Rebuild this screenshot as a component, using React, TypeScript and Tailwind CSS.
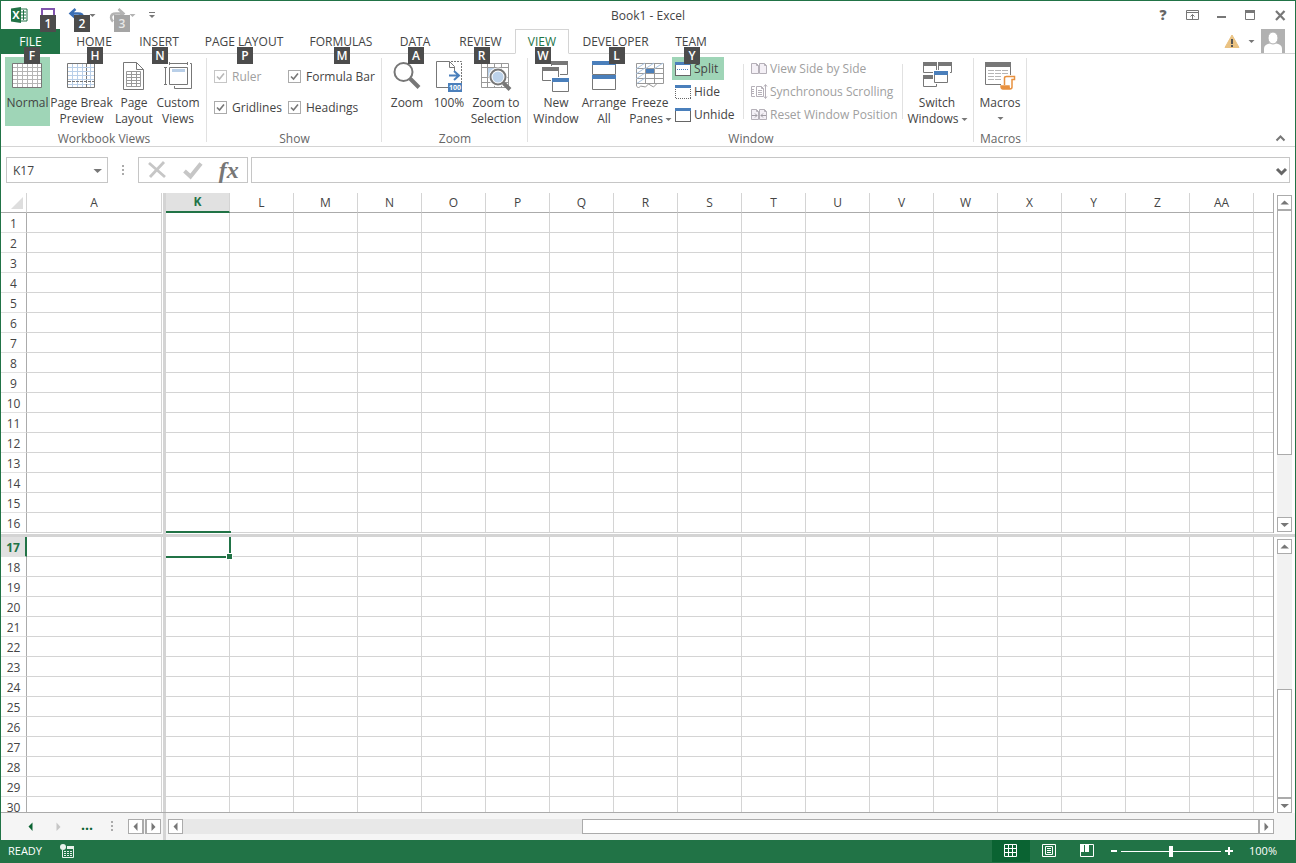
import type { ReactNode } from "react";
import clsx from "clsx";

const GRAY = "#777777";
const BLUE = "#4a7fbb";

const columns = ["K", "L", "M", "N", "O", "P", "Q", "R", "S", "T", "U", "V", "W", "X", "Y", "Z", "AA"];
const topRows = Array.from({ length: 16 }, (_, i) => i + 1);
const bottomRows = Array.from({ length: 14 }, (_, i) => i + 17);

const tabs = [
  { name: "HOME", tip: "H", width: "w-[68px]" },
  { name: "INSERT", tip: "N", width: "w-[62px]" },
  { name: "PAGE LAYOUT", tip: "P", width: "w-[108px]" },
  { name: "FORMULAS", tip: "M", width: "w-[86px]" },
  { name: "DATA", tip: "A", width: "w-[62px]" },
  { name: "REVIEW", tip: "R", width: "w-[69px]" },
  { name: "VIEW", tip: "W", width: "w-[54px]" },
  { name: "DEVELOPER", tip: "L", width: "w-[93px]" },
  { name: "TEAM", tip: "Y", width: "w-[58px]" },
];

function Icon({ w = 32, h = 32, children }: { w?: number; h?: number; children: ReactNode }) {
  return (
    <svg width={w} height={h} viewBox={`0 0 ${w} ${h}`} fill="none" className="shrink-0 overflow-visible" aria-hidden="true">
      {children}
    </svg>
  );
}

function Caret({ dir = "down", color = GRAY }: { dir?: "down" | "up" | "left" | "right"; color?: string }) {
  const paths = {
    down: "M-.5 2h8.500L3.500 6z",
    up: "M-.5 5.500h8.500L3.500 1.500z",
    left: "M5.500-.5v8.500L1.500 3.500z",
    right: "M1.500-.5v8.500l4-4z",
  };
  return (
    <Icon w={7} h={7}>
      <path d={paths[dir]} fill={color} />
    </Icon>
  );
}

function SmallCaret({ color = GRAY }: { color?: string }) {
  return (
    <Icon w={5} h={3}>
      <path d="M-.5 0h6L2.500 3z" fill={color} />
    </Icon>
  );
}

function KeyTip({ label, muted, className }: { label: string; muted?: boolean; className?: string }) {
  return (
    <span
      className={clsx(
        "pointer-events-none absolute z-10 flex h-[17px] w-4 items-center justify-center text-xs font-semibold leading-4",
        muted ? "bg-[#a5a5a5] text-[#e8e8e8]" : "bg-[#4c4c4c] text-white",
        className
      )}
    >
      {label}
    </span>
  );
}

/* ---------- title bar ---------- */

function TitleBar() {
  return (
    <header className="relative flex h-7 items-center justify-between pl-[10px] pr-[9px]">
      <div className="flex h-full items-center">
        <Icon w={17} h={18}>
          <path d="M8 3h8v12H8z" fill="#fff" stroke="#217346" />
          <path d="M9 6h6M9 9h6M9 12h6M12.500 4v10" stroke="#217346" />
          <path d="M0 2.500L10 1v16L0 15.500z" fill="#217346" />
          <text x="5" y="13" textAnchor="middle" fill="#fff" className="text-[11px] font-bold">
            X
          </text>
        </Icon>
        <button aria-label="Save" className="relative ml-3 flex h-7 w-4 items-center justify-center">
          <Icon w={14} h={14}>
            <path d="M1 1h12v12H3l-2-2z" stroke="#8054ad" strokeWidth="2" />
            <path d="M4 8h6v5H4z" fill="#8054ad" />
          </Icon>
          <KeyTip label="1" className="left-0 top-[14px]" />
        </button>
        <button aria-label="Undo" className="relative ml-[13px] flex h-7 w-[26px] items-center justify-between">
          <Icon w={16} h={14}>
            <path d="M6.500 1L1.500 5.500l5 4.500M2 5.500h7c4 0 5 2 5 4s-1 3-2 4" stroke="#3b6fb5" strokeWidth="2.500" />
          </Icon>
          <SmallCaret />
          <KeyTip label="2" className="left-[5px] top-[14px]" />
        </button>
        <button aria-label="Redo" className="relative ml-[14px] flex h-7 w-[26px] items-center justify-between">
          <Icon w={16} h={14}>
            <path d="M9.500 1l5 4.500-5 4.500M14 5.500H7C3 5.500 2 7.500 2 9.500s1 3 2 4" stroke="#b3b3b3" strokeWidth="2.500" />
          </Icon>
          <SmallCaret color="#b3b3b3" />
          <KeyTip label="3" muted className="left-[5px] top-[14px]" />
        </button>
        <button aria-label="Customize Quick Access Toolbar" className="ml-3 flex h-7 w-[10px] items-center justify-center">
          <Icon w={6} h={6}>
            <path d="M0 .5h6" stroke={GRAY} />
            <path d="M0 3h6L3 6z" fill={GRAY} />
          </Icon>
        </button>
      </div>

      <h1 className="pointer-events-none absolute inset-x-0 top-[7px] text-center text-xs font-normal leading-4">
        Book1 - Excel
      </h1>

      <div className="flex h-full items-center">
        <button aria-label="Help" className="w-[30px] text-center text-sm font-extrabold leading-4 text-[#666]">
          ?
        </button>
        <button aria-label="Ribbon Display Options" className="flex w-[29px] justify-center">
          <Icon w={13} h={11}>
            <path d="M.5.500h12v9H.500zM.500 2.500h12M6.500 9V4.500M4.500 6.500l2-2 2 2" stroke={GRAY} />
          </Icon>
        </button>
        <button aria-label="Minimize" className="flex w-[29px] justify-center">
          <Icon w={9} h={10}>
            <path d="M0 6h9v2H0z" fill={GRAY} />
          </Icon>
        </button>
        <button aria-label="Maximize" className="flex w-[29px] justify-center">
          <Icon w={11} h={11}>
            <path d="M.5 1v8.500h9V1" stroke={GRAY} />
            <path d="M0 0h10v3H0z" fill={GRAY} />
          </Icon>
        </button>
        <button aria-label="Close" className="ml-[10px] flex w-[11px] justify-center">
          <Icon w={11} h={11}>
            <path d="M1 1l8.500 9M9.500 1L1 10" stroke={GRAY} strokeWidth="2.200" />
          </Icon>
        </button>
      </div>
    </header>
  );
}

function TabBar() {
  return (
    <nav className="flex h-[25px] text-xs leading-4" aria-label="Ribbon tabs">
      <button className="relative flex w-[59px] justify-center bg-[#217346] pt-[5px] text-white">
        FILE
        <KeyTip label="F" className="left-[23px] top-[18px]" />
      </button>
      {tabs.map((tab) => (
        <button
          key={tab.name}
          className={clsx(
            "relative flex justify-center whitespace-nowrap border-b",
            tab.width,
            tab.name === "VIEW"
              ? "border-x border-t border-[#d4d4d4] border-b-white pt-1 text-[#217346]"
              : "border-[#d4d4d4] pt-[5px]"
          )}
        >
          {tab.name}
          <KeyTip label={tab.tip} className={clsx("left-1/2 -ml-[7px]", tab.name === "VIEW" ? "top-[17px]" : "top-[18px]")} />
        </button>
      ))}
      <div className="flex flex-1 items-center justify-end border-b border-[#d4d4d4] pr-[10px]">
        <button aria-label="Account warning" className="flex items-center gap-[9px]">
          <Icon w={16} h={15}>
            <path d="M8 1l7 12.500H1z" fill="#eac282" stroke="#eac282" strokeLinejoin="round" />
            <path d="M7 5h2v5H7zM7 11h2v2H7z" fill="#555" />
          </Icon>
          <SmallCaret />
        </button>
        <button aria-label="Account" className="ml-[7px]">
          <Icon w={24} h={24}>
            <path d="M0 0h24v24H0z" fill="#b1b1b1" />
            <path d="M3 24v-4c0-4 3-5 6-5.500h6c3 .5 6 1.500 6 5.500v4z" fill="#fff" />
            <ellipse cx="12" cy="9" rx="5" ry="6" fill="#fff" stroke="#b1b1b1" />
          </Icon>
        </button>
      </div>
    </nav>
  );
}

/* ---------- ribbon ---------- */

function Group({ label, className, children }: { label: string; className: string; children: ReactNode }) {
  return (
    <section className={clsx("relative flex h-[92px] flex-col pt-[3px]", className)}>
      <div className="flex h-[69px] shrink-0">{children}</div>
      <h2 className="mt-[5px] text-center text-xs font-normal leading-4 text-[#666]">{label}</h2>
      <span className="absolute right-0 top-1 h-[84px] w-px bg-[#e1e1e1]" />
    </section>
  );
}

function BigButton({
  lines,
  width,
  active,
  caret,
  children,
}: {
  lines: string[];
  width: string;
  active?: boolean;
  caret?: boolean;
  children: ReactNode;
}) {
  return (
    <button
      className={clsx("flex h-[69px] shrink-0 flex-col items-center pt-0.5 text-xs leading-4 whitespace-nowrap", width, active && "bg-[#9fd5b7]")}
    >
      {children}
      <span className="mt-1">{lines[0]}</span>
      <span className="flex h-4 items-center gap-[3px]">
        {lines[1]}
        {caret && <SmallCaret />}
      </span>
    </button>
  );
}

function SmallButton({ label, active, disabled, children }: { label: string; active?: boolean; disabled?: boolean; children: ReactNode }) {
  return (
    <button
      disabled={disabled}
      className={clsx(
        "flex h-[23px] items-center gap-[3px] pl-[3px] pr-[6px] text-xs whitespace-nowrap",
        active && "bg-[#9fd5b7]",
        disabled && "text-[#a0a0a0]"
      )}
    >
      {children}
      {label}
    </button>
  );
}

function Check({ label, disabled }: { label: string; disabled?: boolean }) {
  return (
    <label className={clsx("flex h-[31px] items-center gap-[5px] text-xs whitespace-nowrap", disabled && "text-[#a0a0a0]")}>
      <span className="relative flex">
        <input
          type="checkbox"
          defaultChecked
          disabled={disabled}
          className="peer size-[13px] appearance-none border border-[#ababab] bg-white disabled:border-[#c6c6c6]"
        />
        <svg
          viewBox="0 0 13 13"
          fill="none"
          className={clsx("pointer-events-none invisible absolute inset-0 size-[13px] peer-checked:visible", disabled ? "text-[#b8b8b8]" : "text-[#777]")}
        >
          <path d="M3 6.500L5.500 9 10 3.500" stroke="currentColor" strokeWidth="1.600" />
        </svg>
      </span>
      {label}
    </label>
  );
}

function NormalIcon() {
  return (
    <Icon w={31}>
      <path d="M.5 4.500h29v24H.5z" fill="#fff" />
      <path d="M1 8.500h28M1 12.500h28M1 16.500h28M1 20.500h28M1 24.500h28M5.500 5v23M10.500 5v23M15.500 5v23M20.500 5v23M25.500 5v23" stroke="#b5b5b5" />
      <path d="M.5 4.500h29v24H.5z" stroke={GRAY} />
    </Icon>
  );
}

function PageBreakIcon() {
  return (
    <Icon w={31}>
      <path d="M2 8.500h26M2 12.500h26M2 16.500h26M2 20.500h26M2 25.500h26M6.500 5v23M11.500 5v23M16.500 5v23M24.500 5v23" stroke="#b9cfe8" />
      <path d="M1.500 4.500h27v24h-27z" stroke={GRAY} />
      <path d="M2 22.500h26M20.500 5v23" stroke={GRAY} strokeDasharray="3 1" />
    </Icon>
  );
}

function PageLayoutIcon() {
  return (
    <Icon>
      <path d="M5.500 3.500h13l7 7v20h-20z" fill="#fff" stroke={GRAY} />
      <path d="M18.500 3.500v7h7" stroke={GRAY} />
      <path d="M8.500 12.500h14v15h-14zM8.500 15.500h14M8.500 18.500h14M8.500 21.500h14M8.500 24.500h14M13.500 12v15M18.500 12v15" stroke="#999" />
    </Icon>
  );
}

function CustomViewsIcon() {
  return (
    <Icon>
      <path d="M7.500 8.500h18v17h-18z" stroke={GRAY} />
      <path d="M10 10h13v3H10z" fill="#b9cfe8" />
      <path d="M7.500 3v3M25.500 3v3M7 4.500h19M2 8.500h3M2 25.500h3M3.500 8v18M28 4.500h1.500v25h-17V27" stroke={GRAY} />
    </Icon>
  );
}

function ZoomIcon() {
  return (
    <Icon w={30}>
      <circle cx="11.500" cy="13" r="9" fill="#fff" stroke={GRAY} strokeWidth="2" />
      <path d="M18 19.500l9 9" stroke={GRAY} strokeWidth="4" />
    </Icon>
  );
}

function HundredIcon() {
  return (
    <Icon w={28} h={32}>
      <path d="M13 28.500H1.500v-26h13l5 5v5" stroke={GRAY} />
      <path d="M14.500 2.500v6h5" stroke={GRAY} />
      <path d="M16 2.500h10.500V24" stroke={GRAY} strokeDasharray="2 1" />
      <path d="M14 16.500h9M19 12l5 4.500-5 4.500" stroke={BLUE} strokeWidth="2" />
      <path d="M13 24h14v9H13z" fill={BLUE} />
      <text x="20" y="31" textAnchor="middle" fill="#fff" className="text-[7px] font-bold">
        100
      </text>
    </Icon>
  );
}

function ZoomSelectionIcon() {
  return (
    <Icon>
      <path d="M1.500 4.500h27v24h-27zM1.500 8.500h27M1.500 18.500h27M1.500 23.500h27M7.500 4v24M14.500 4v24M21.500 4v24" stroke="#999" />
      <path d="M8 9h7v9H8z" fill="#bcd2ea" />
      <circle cx="18" cy="18" r="9.500" fill="#fff" />
      <circle cx="18" cy="18" r="7.500" fill="#fff" stroke={GRAY} strokeWidth="2" />
      <circle cx="18" cy="18" r="5.500" fill="#bcd2ea" />
      <path d="M23.500 24l6.500 6.500" stroke={GRAY} strokeWidth="4" />
    </Icon>
  );
}

function Win({ x, y, w, h, color = GRAY }: { x: number; y: number; w: number; h: number; color?: string }) {
  return (
    <>
      <path d={`M${x + 0.5} ${y + 0.5}h${w - 1}v${h - 1}h${1 - w}z`} fill="#fff" stroke={GRAY} />
      <path d={`M${x} ${y}h${w}v4h${-w}z`} fill={color} />
    </>
  );
}

function NewWindowIcon() {
  return (
    <Icon>
      <Win x={11} y={2} w={17} h={14} />
      <path d="M1 7h19v16H1z" fill="#fff" />
      <Win x={2} y={8} w={17} h={14} />
      <path d="M11 18h19v14H11z" fill="#fff" />
      <Win x={12} y={19} w={17} h={14} color={BLUE} />
    </Icon>
  );
}

function ArrangeIcon() {
  return (
    <Icon>
      <Win x={4} y={2} w={24} h={14} color={BLUE} />
      <Win x={4} y={16} w={24} h={15} color={BLUE} />
    </Icon>
  );
}

function FreezeIcon() {
  return (
    <Icon>
      <path d="M2.500 4.500h27v20h-27zM2.500 9.500h27M2.500 14.500h27M2.500 19.500h27M11.500 4v20M20.500 4v20" stroke="#999" />
      <path d="M2 10l9-6M11 10l9-6M20 10l9-6M2 15l9-6M2 20l9-6M2 25l9-6" stroke="#a9c4e2" />
      <path d="M12 10h8v4h-8z" fill={BLUE} />
      <path d="M2.500 24v3c1 2 3 2 4 0l5 1 3-3 5 3 3-3" stroke="#999" />
    </Icon>
  );
}

function SwitchIcon() {
  return (
    <Icon>
      <Win x={2} y={3} w={14} h={11} />
      <Win x={17} y={3} w={14} h={11} />
      <Win x={2} y={16} w={14} h={12} />
      <path d="M12 11h17v14H12z" fill="#fff" />
      <Win x={13} y={12} w={14} h={12} color={BLUE} />
    </Icon>
  );
}

function MacrosIcon() {
  return (
    <Icon>
      <path d="M1.500 3.500h25v22h-25z" fill="#fff" stroke={GRAY} />
      <path d="M1 3h26v5H1z" fill={GRAY} />
      <path d="M4 11.500h20M4 14.500h20M4 17.500h20M4 20.500h20" stroke="#b5b5b5" strokeDasharray="6 1" />
      <path d="M17 16h15v15H17z" fill="#fff" />
      <path d="M20.500 26v-7c0-1 .5-1.500 2-1.500h8v3H28V28c0 1.500-.5 2-2 2h-7c-1.500 0-2-1-2-3h8c0 2 .5 3 1.500 3" stroke="#e8913f" strokeWidth="1.500" />
      <path d="M18 27h7v3h-7z" fill="#e8913f" />
    </Icon>
  );
}

function SmallWindow({ kind }: { kind: "split" | "hide" | "unhide" }) {
  return (
    <Icon w={16} h={14}>
      <path
        d="M.5.500h15v13H.5z"
        fill="#fff"
        stroke="#666"
        strokeDasharray={kind === "hide" ? "1 1" : undefined}
        shapeRendering="crispEdges"
      />
      <path d="M0 0h16v3H0z" fill={BLUE} />
      {kind === "split" && <path d="M2 7.500h12" stroke={BLUE} strokeDasharray="1 1" shapeRendering="crispEdges" />}
    </Icon>
  );
}

function Pages({ kind }: { kind: "side" | "sync" | "reset" }) {
  return (
    <Icon w={16} h={15}>
      {kind === "sync" ? (
        <path d="M4 2.500H.500v10H4M5.500 2.500h5l2 2v8h-7zM10.500 2.500v2h2M7 6.500h4M7 8.500h4M7 10.500h4M1 5.500h2M1 7.500h2M1 9.500h2M14.500 1v13M13 2.500l1.500-2 1.500 2M13 12.500l1.500 2 1.500-2" stroke="#b5b0b8" />
      ) : (
        <>
          <path d="M.5 2.500h5l2 2v8h-7zM5.500 2.500v2h2M8.500 2.500h5l2 2v8h-7zM13.500 2.500v2h2" fill="#f4f0f6" stroke="#b5b0b8" />
          {kind === "reset" && <path d="M1 8.500h5M4 6.500l2 2-2 2M15 8.500h-5M12 6.500l-2 2 2 2" stroke="#a09ca4" />}
        </>
      )}
    </Icon>
  );
}

function Divider() {
  return <span className="mt-[7px] h-[55px] w-px shrink-0 bg-[#e1e1e1]" />;
}

function Ribbon() {
  return (
    <div className="flex h-[93px] border-b border-[#d4d4d4]">
      <Group label="Workbook Views" className="w-[206px] px-1">
        <BigButton lines={["Normal"]} width="w-[45px]" active>
          <NormalIcon />
        </BigButton>
        <BigButton lines={["Page Break", "Preview"]} width="w-[63px]">
          <PageBreakIcon />
        </BigButton>
        <BigButton lines={["Page", "Layout"]} width="w-[42px]">
          <PageLayoutIcon />
        </BigButton>
        <BigButton lines={["Custom", "Views"]} width="w-[46px]">
          <CustomViewsIcon />
        </BigButton>
      </Group>
      <Group label="Show" className="w-[175px]">
        <div className="flex gap-[10px] pl-[7px] pt-1">
          <div className="w-16">
            <Check label="Ruler" disabled />
            <Check label="Gridlines" />
          </div>
          <div>
            <Check label="Formula Bar" />
            <Check label="Headings" />
          </div>
        </div>
      </Group>
      <Group label="Zoom" className="w-[146px] px-[3px]">
        <BigButton lines={["Zoom"]} width="w-[44px]">
          <ZoomIcon />
        </BigButton>
        <BigButton lines={["100%"]} width="w-[40px]">
          <HundredIcon />
        </BigButton>
        <BigButton lines={["Zoom to", "Selection"]} width="w-[54px]">
          <ZoomSelectionIcon />
        </BigButton>
      </Group>
      <Group label="Window" className="w-[446px] px-1">
        <BigButton lines={["New", "Window"]} width="w-[48px]">
          <NewWindowIcon />
        </BigButton>
        <BigButton lines={["Arrange", "All"]} width="w-[48px]">
          <ArrangeIcon />
        </BigButton>
        <BigButton lines={["Freeze", "Panes"]} width="w-[44px]" caret>
          <FreezeIcon />
        </BigButton>
        <div className="flex w-[71px] shrink-0 flex-col items-start">
          <SmallButton label="Split" active>
            <SmallWindow kind="split" />
          </SmallButton>
          <SmallButton label="Hide">
            <SmallWindow kind="hide" />
          </SmallButton>
          <SmallButton label="Unhide">
            <SmallWindow kind="unhide" />
          </SmallButton>
        </div>
        <Divider />
        <div className="flex w-[158px] shrink-0 flex-col items-start pl-1">
          <SmallButton label="View Side by Side" disabled>
            <Pages kind="side" />
          </SmallButton>
          <SmallButton label="Synchronous Scrolling" disabled>
            <Pages kind="sync" />
          </SmallButton>
          <SmallButton label="Reset Window Position" disabled>
            <Pages kind="reset" />
          </SmallButton>
        </div>
        <Divider />
        <BigButton lines={["Switch", "Windows"]} width="w-[68px]" caret>
          <SwitchIcon />
        </BigButton>
      </Group>
      <Group label="Macros" className="w-[53px]">
        <BigButton lines={["Macros"]} width="w-[52px]" caret>
          <MacrosIcon />
        </BigButton>
      </Group>
      <div className="flex flex-1 items-end justify-end pb-[5px] pr-[10px]">
        <button aria-label="Collapse the Ribbon">
          <Icon w={9} h={6}>
            <path d="M.5 5.500l4-4 4 4" stroke={GRAY} strokeWidth="2" />
          </Icon>
        </button>
      </div>
    </div>
  );
}

/* ---------- formula bar ---------- */

function Dots() {
  return (
    <Icon w={2} h={11}>
      <path d="M0 0h2v2H0zM0 4h2v2H0zM0 8h2v2H0z" fill="#ababab" />
    </Icon>
  );
}

function FormulaBar() {
  return (
    <div className="flex h-[46px] items-center px-[5px]">
      <div className="flex h-[26px] w-[102px] items-center border border-[#c6c6c6] pr-[6px]">
        <input aria-label="Name Box" defaultValue="K17" className="min-w-0 flex-1 pl-[6px] pt-0.5 text-xs outline-none" />
        <button aria-label="Name Box list">
          <Caret />
        </button>
      </div>
      <div className="flex w-[30px] justify-center">
        <Dots />
      </div>
      <div className="flex h-[26px] w-[110px] items-center justify-around border border-[#c6c6c6]">
        <button aria-label="Cancel">
          <Icon w={18} h={18}>
            <path d="M2 2l16 14M17 1L3 16" stroke="#c6c6c6" strokeWidth="2.800" />
          </Icon>
        </button>
        <button aria-label="Enter">
          <Icon w={20} h={18}>
            <path d="M2.500 10l6 5.500L19 2.500" stroke="#c6c6c6" strokeWidth="4" />
          </Icon>
        </button>
        <button aria-label="Insert Function" className="font-['Liberation_Serif',serif] text-2xl font-bold italic leading-5 text-[#777]">
          fx
        </button>
      </div>
      <div className="ml-[3px] flex h-[26px] flex-1 items-center border border-[#c6c6c6] pr-0.5">
        <input aria-label="Formula Bar input" className="h-full min-w-0 flex-1 px-2 text-xs outline-none" />
        <button aria-label="Expand Formula Bar" className="pt-1">
          <Icon w={11} h={8}>
            <path d="M1 1l4.500 4.500L10 1" stroke="#666" strokeWidth="3" />
          </Icon>
        </button>
      </div>
    </div>
  );
}

/* ---------- sheet ---------- */

const line = "border-b border-[#d4d4d4]";

function Columns() {
  return (
    <colgroup>
      <col className="w-[26px]" />
      <col className="w-[135px]" />
      <col className="w-1" />
      {columns.map((c) => (
        <col key={c} className="w-16" />
      ))}
      <col />
    </colgroup>
  );
}

function Row({ n }: { n: number }) {
  const current = n === 17;
  return (
    <tr className="h-5">
      <th
        scope="row"
        className={clsx(
          "h-5 border-b border-[#e1e1e1] p-0 pt-0.5 text-center leading-4",
          current
            ? "border-r-2 border-r-[#217346] bg-[#e1e1e1] font-bold text-[#217346]"
            : "border-r border-r-[#ababab] font-normal"
        )}
      >
        {n}
      </th>
      <td className={clsx("border-r p-0", line)} />
      <td className="border-r-[3px] border-[#d4d4d4] p-0" />
      {columns.map((c) => (
        <td key={c} className={clsx("relative border-r p-0", line)}>
          {c === "K" && n === 16 && <span className="absolute -right-0.5 bottom-[-1px] left-0 z-10 h-0.5 bg-[#217346]" />}
          {c === "K" && current && (
            <>
              <span className="absolute -bottom-0.5 -right-0.5 left-0 top-0 z-10 border-b-2 border-r-2 border-[#217346]" />
              <span className="absolute -bottom-1 -right-1 z-10 size-[7px] border border-white bg-[#217346]" />
            </>
          )}
        </td>
      ))}
      <td className={clsx("p-0", line)} />
    </tr>
  );
}

function ScrollButton({ dir }: { dir: "down" | "up" | "left" | "right" }) {
  return (
    <button aria-label={`Scroll ${dir}`} className="flex size-[15px] shrink-0 items-center justify-center border border-[#ababab] bg-white">
      <Caret dir={dir} />
    </button>
  );
}

const tableClass = "w-full table-fixed border-separate border-spacing-0 text-xs";

function Sheet() {
  return (
    <main className="flex min-h-0 flex-1 flex-col">
      <div className="flex">
        <div className="min-w-0 flex-1 overflow-hidden border-r border-[#ababab]">
          <table className={tableClass}>
            <Columns />
            <thead>
              <tr className="h-5">
                <th aria-label="Select all" className="h-5 border-b border-r border-[#ababab] border-r-[#d4d4d4] p-0">
                  <span className="flex justify-end pr-[3px]">
                    <Icon w={12} h={12}>
                      <path d="M12 0v12H0z" fill="#dedede" />
                    </Icon>
                  </span>
                </th>
                <th className="border-b border-r border-[#ababab] border-r-[#d4d4d4] p-0 font-normal">A</th>
                <th className="border-r-[3px] border-[#d4d4d4] p-0" />
                {columns.map((c) => (
                  <th
                    key={c}
                    scope="col"
                    className={clsx(
                      "border-r border-r-[#d4d4d4] p-0 leading-4",
                      c === "K" ? "border-b-2 border-b-[#217346] bg-[#e1e1e1] font-bold text-[#217346]" : "border-b border-b-[#ababab] font-normal"
                    )}
                  >
                    {c}
                  </th>
                ))}
                <th className="border-b border-[#ababab] p-0" />
              </tr>
            </thead>
            <tbody>
              {topRows.map((n) => (
                <Row key={n} n={n} />
              ))}
            </tbody>
          </table>
        </div>
        <div className="flex w-[21px] flex-col px-[3px] pt-0.5 pb-px">
          <ScrollButton dir="up" />
          <div className="flex flex-1 flex-col bg-[#f2f2f2]">
            <div className="flex-1 border border-[#ababab] bg-white" />
            <div className="h-[62px]" />
          </div>
          <ScrollButton dir="down" />
        </div>
      </div>

      <div className="flex h-px shrink-0 pl-[162px]">
        <span className="w-[3px] bg-[#d4d4d4]" />
      </div>
      <div className="h-[3px] shrink-0 bg-[#d4d4d4]" />

      <div className="flex min-h-0 flex-1">
        <div className="min-w-0 flex-1 overflow-hidden border-b border-r border-[#ababab]">
          <table className={tableClass}>
            <Columns />
            <tbody>
              {bottomRows.map((n) => (
                <Row key={n} n={n} />
              ))}
            </tbody>
          </table>
        </div>
        <div className="flex w-[21px] flex-col px-[3px] pt-0.5">
          <ScrollButton dir="up" />
          <div className="flex flex-1 flex-col bg-[#f2f2f2]">
            <div className="h-[135px]" />
            <div className="flex-1 border border-[#ababab] bg-white" />
          </div>
          <ScrollButton dir="down" />
        </div>
      </div>
    </main>
  );
}

function SheetBar() {
  return (
    <div className="flex h-[27px] shrink-0 items-center bg-[#f5f5f5]">
      <div className="flex w-[162px] items-center pl-[26px] pr-0.5">
        <button aria-label="Previous sheet">
          <Caret dir="left" color="#0a6332" />
        </button>
        <button aria-label="Next sheet" className="ml-[21px]">
          <Caret dir="right" color="#c6c6c6" />
        </button>
        <button className="ml-[19px] pb-1 text-sm font-bold leading-4 text-[#0a6332]">...</button>
        <span className="ml-auto mr-[15px]">
          <Dots />
        </span>
        <ScrollButton dir="left" />
        <span className="h-[15px] w-[3px] border-x border-[#ababab]" />
        <ScrollButton dir="right" />
      </div>
      <span className="h-full w-[3px] bg-[#d4d4d4]" />
      <div className="flex flex-1 pl-0.5 pr-[21px]">
        <ScrollButton dir="left" />
        <div className="flex flex-1 bg-[#e8e8e8]">
          <div className="w-[399px]" />
          <div className="flex-1 border border-[#ababab] bg-white" />
        </div>
        <ScrollButton dir="right" />
      </div>
    </div>
  );
}

function StatusBar() {
  return (
    <footer className="flex h-[22px] shrink-0 items-center bg-[#217346] pl-[7px] pr-[18px] text-[11px] text-white">
      <span>READY</span>
      <button aria-label="Record Macro" className="ml-[18px]">
        <Icon w={14} h={14}>
          <path d="M2.500 6v7.500h11V2.500H7" stroke="#e8f2ec" />
          <path d="M7 2h7v3H7z" fill="#e8f2ec" />
          <path d="M4 7.500h8M4 9.500h8M4 11.500h8" stroke="#e8f2ec" strokeDasharray="2 1" />
          <circle cx="3" cy="3" r="3" fill="#e8f2ec" />
        </Icon>
      </button>
      <div className="ml-auto flex h-full">
        <button aria-label="Normal view" className="flex w-[38px] items-center justify-center bg-[#0a6332]">
          <Icon w={14} h={14}>
            <path d="M.5.500h12v12H.500zM.500 4.500h12M.500 8.500h12M4.500.500v12M8.500.500v12" stroke="#fff" />
          </Icon>
        </button>
        <button aria-label="Page Layout view" className="flex w-[38px] items-center justify-center">
          <Icon w={14} h={14}>
            <path d="M.5.500h13v12H.500zM3.500 2.500h7v8h-7zM5 4.500h4M5 6.500h4M5 8.500h4" stroke="#fff" />
          </Icon>
        </button>
        <button aria-label="Page Break Preview" className="flex w-[38px] items-center justify-center">
          <Icon w={14} h={14}>
            <path d="M.5.500h13v12H.500z" stroke="#fff" />
            <path d="M0 0h4v8H0zM5 0h4v8H5z" fill="#fff" />
          </Icon>
        </button>
      </div>
      <button aria-label="Zoom out" className="ml-[5px]">
        <Icon w={6} h={8}>
          <path d="M0 3h6v2H0z" fill="#fff" />
        </Icon>
      </button>
      <input
        type="range"
        aria-label="Zoom"
        min={0}
        max={100}
        defaultValue={50}
        className="mx-1 h-[11px] w-[100px] appearance-none bg-transparent [&::-webkit-slider-runnable-track]:h-px [&::-webkit-slider-runnable-track]:bg-white [&::-webkit-slider-thumb]:-mt-[5px] [&::-webkit-slider-thumb]:h-[11px] [&::-webkit-slider-thumb]:w-1 [&::-webkit-slider-thumb]:appearance-none [&::-webkit-slider-thumb]:bg-white"
      />
      <button aria-label="Zoom in">
        <Icon w={8} h={8}>
          <path d="M0 3h8v2H0zM3 0h2v8H3z" fill="#fff" />
        </Icon>
      </button>
      <button className="w-11 text-right">100%</button>
    </footer>
  );
}

export default function App() {
  return (
    <div className="flex h-screen flex-col overflow-hidden border border-[#217346] bg-white font-['Open_Sans','Noto_Sans',sans-serif] text-[#444]">
      <TitleBar />
      <TabBar />
      <Ribbon />
      <FormulaBar />
      <Sheet />
      <SheetBar />
      <StatusBar />
    </div>
  );
}
